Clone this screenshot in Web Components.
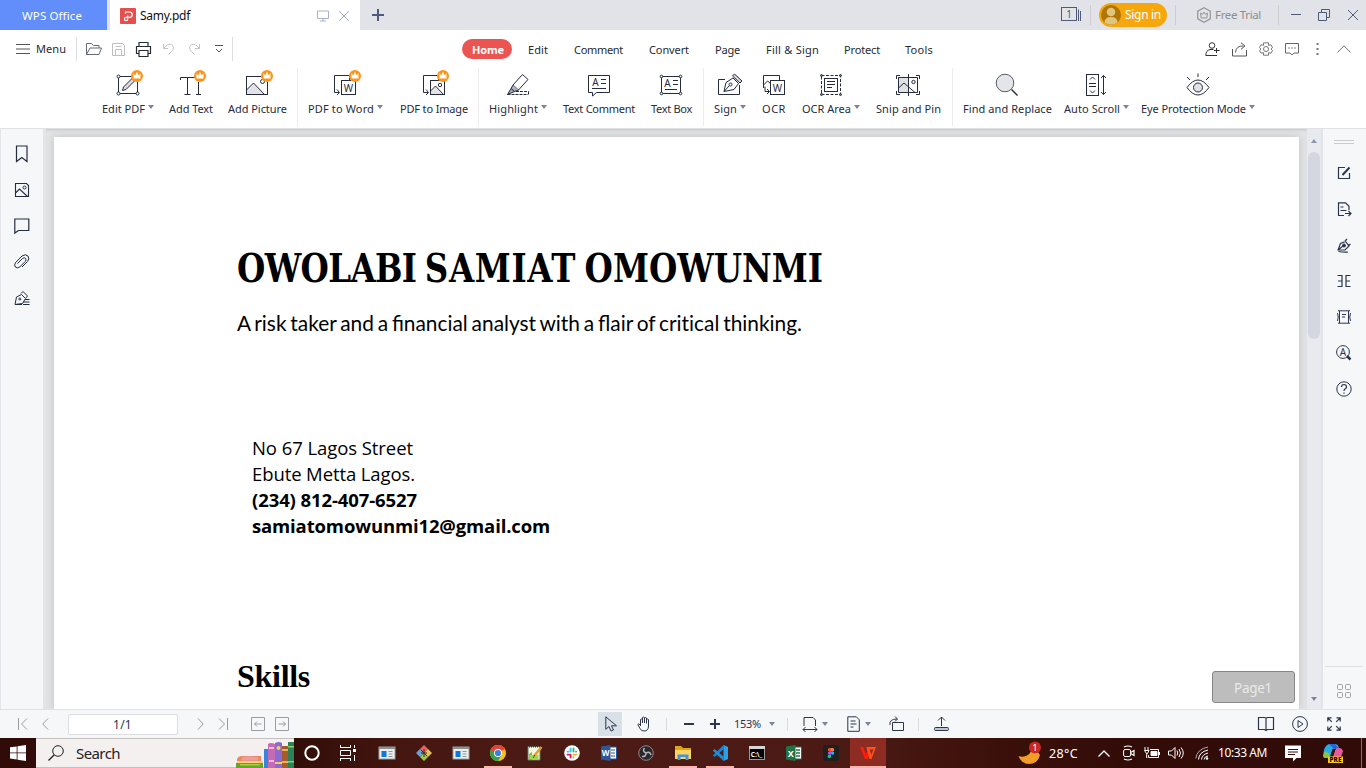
<!DOCTYPE html>
<html lang="en">
<head>
<meta charset="utf-8">
<title>Samy.pdf - WPS Office</title>
<style>
html,body{margin:0;height:100%;overflow:hidden;background:#dcdddf}
body{font-family:"Noto Sans","Open Sans",sans-serif;font-size:11px;color:#262c3e}
</style>
</head>
<body>
<app-window></app-window>
<script>
const crown = x => `<circle cx="${x}" cy="6" r="6" fill="#f9951b" stroke="none"/><path d="M${x-3.5} 3.200l1.300 1.800h.8l.9-2.500h1l.9 2.500h.8l1.300-1.800v5.300h-7z" fill="#fff" stroke="none"/>`;
const behind = `<path d="M18.500 10.500V5.500H3.500V22.500H8M6 19.500l2.500 3-2.500 2.500"/>`;
const appIcon = `<rect x="0" y="2" width="16" height="12" fill="#eceeee" stroke="#9aa0a0"/><path d="M0 3h16" stroke="#8b9293" stroke-width="2"/><rect x="2.500" y="6" width="5" height="6" fill="#0b79d8" stroke="none"/><path d="M9.500 6.500h4M9.500 9h4M9.500 11.500h4" stroke="#8e9698"/>`;
/* name: [width, height, markup] */
const ICONS = {
  edit:[28,28,`<rect x="4.500" y="6.500" width="19" height="17"/><path d="M8.500 20.500l1-3.500 9-9 2.500 2.500-9 9z" fill="#d9dbe0"/><g fill="#fff"><circle cx="4.500" cy="6.500" r="1.500"/><circle cx="4.500" cy="23.500" r="1.500"/><circle cx="23.500" cy="23.500" r="1.500"/></g>${crown(23)}`],
  addtext:[28,28,`<path d="M3.500 10V7.500H18M10.500 7.500V24M7.500 24.500h6M21.500 12V24M19 24.500h5"/>${crown(23)}`],
  picture:[28,28,`<path d="M3.500 20l7-7 11 11.500h-18z" fill="#e1e3e6"/><rect x="3.500" y="6.500" width="21" height="18"/><circle cx="19.500" cy="11.500" r="2"/>${crown(24)}`],
  toword:[28,28,`${behind}<rect x="10.500" y="10.500" width="14" height="14"/><text x="17.500" y="21.500" font-size="10">W</text>${crown(24)}`],
  toimage:[28,28,`${behind}<path d="M10.500 21l5-5 8 8.500h-13z" fill="#e1e3e6"/><rect x="10.500" y="10.500" width="14" height="14"/><circle cx="20" cy="15" r="1.700"/>${crown(23)}`],
  highlight:[28,28,`<path d="M18.500 4.500l5.500 5-9.500 10.500-5.500-5z"/><path d="M9 15l-2 3.500 3.500 3 4-1.500M7 18.500l-3.500 6 7-3" fill="#aaaeb8"/><path d="M3.500 24.500h21M12 21.500h12.500v3" stroke-dasharray="3 1"/>`],
  comment:[28,28,`<path d="M3.500 5.500h21v17h-13l-4 3.500v-3.500h-4z"/><text x="10.500" y="15.500" font-size="10">A</text><path d="M16 9.500h5M16 13.500h5M7 18.500h14"/>`],
  textbox:[28,28,`<rect x="4.500" y="6.500" width="19" height="17"/><text x="10.500" y="17" font-size="10">A</text><path d="M16 10.500h5M16 14.500h5M8 19.500h12"/><g fill="#fff"><circle cx="4.500" cy="6.500" r="1.300"/><circle cx="4.500" cy="23.500" r="1.300"/><circle cx="23.500" cy="6.500" r="1.300"/><circle cx="23.500" cy="23.500" r="1.300"/></g>`],
  sign:[28,28,`<path d="M9 9.500H2.500v15h21V15"/><path d="M8 21.500l2-9 7-4.500 5.500 5.500-4.500 6z"/><path d="M16.500 6l2-2 7.500 7-2 2z" fill="#d4d6da"/><circle cx="14.500" cy="14.500" r="1.500"/><path d="M8 21.500l5-5.500"/>`],
  ocr:[28,28,`<path d="M19.500 10V5.500h-16V18M3.500 15l4-4 3 2.500M5 16.500v5h4M7 19l2.500 2.500L7 24"/><rect x="10.500" y="10.500" width="14" height="14" fill="#fff"/><text x="17.500" y="21.500" font-size="10">W</text>`],
  area:[28,28,`<rect x="4.500" y="5.500" width="19" height="19" stroke-dasharray="3 1.500"/><rect x="7.500" y="8.500" width="13" height="13"/><path d="M10 11.500h8M10 14.500h8M10 17.500h5"/><g fill="#777d8b"><circle cx="4.500" cy="5.500" r="1"/><circle cx="23.500" cy="5.500" r="1"/><circle cx="4.500" cy="24.500" r="1"/><circle cx="23.500" cy="24.500" r="1"/></g>`],
  snip:[28,28,`<path d="M4.500 7.500h9.500v15H4.500z" fill="#dfe1e5" stroke="none"/><path d="M4.500 18l5.500-5 11 9.500"/><path d="M4.500 7.500h19v15h-19zM14.500 4v22"/><circle cx="19.500" cy="12" r="1.700"/><path d="M6 5.500H2.500V9M22 5.500h3.500V9M6 24.500H2.500V21M22 24.500h3.500V21"/>`],
  find:[28,28,`<circle cx="12" cy="13" r="8.800" fill="#e3e5e8" stroke="#555b68"/><path d="M18.500 19.500l6 6" stroke-width="1.400"/>`],
  scroll:[28,28,`<rect x="4.500" y="4.500" width="12" height="21"/><path d="M7 13.500h7M7 16.500h7M8 9.500l2.500-2.500L13 9.500M8 20.500l2.500 2.500L13 20.500M21.500 5.500v19M19 8l2.500-2.500L24 8M19 22l2.500 2.500L24 22"/>`],
  eye:[28,28,`<path d="M3 17.500Q8.500 10 14 10t11 7.500Q19.500 25 14 25T3 17.500z"/><circle cx="14" cy="17.500" r="4.500" fill="#dfe1e5"/><path d="M14 3.500V7M3 7l3 3M25 7l-3 3"/>`],

  pdf:[16,16,`<rect width="16" height="16" rx="1" fill="#e5504f" stroke="none"/><path d="M5.500 6V4H9.500a2.700 2.700 0 0 1 0 5.400H6a1.600 1.600 0 0 0 0 3.200c1.200 0 1.700-.6 1.700-1.600V7.500" stroke="#fff" stroke-width="1.200"/>`],
  monitor:[12,12,`<path d="M.5 1h11v7.500H.5zM3 11h6M6 8.500V11" stroke="#a7b1c8"/>`],
  x:[10,10,`<path d="M0 0l10 10M10 0L0 10"/>`],
  plus:[12,12,`<path d="M6 0v12M0 6h12" stroke-width="2"/>`],
  winlist:[20,14,`<rect x=".5" y=".5" width="15" height="13"/><path d="M17.500 2.500V14M19.500 4v10"/><text x="8" y="10.500" font-size="10">1</text>`],
  avatar:[20,20,`<circle cx="10" cy="10" r="10" fill="#ae7604" stroke="none"/><circle cx="10" cy="7" r="4.300" fill="#e1c480" stroke="none"/><path d="M3.500 17.500q0-5.500 6.500-5.500t6.500 5.500q-6.500 4.500-13 0z" fill="#e1c480" stroke="none"/>`],
  hex:[14,16,`<path d="M7 .8l6.300 3.300v7.800L7 15.200.7 11.900V4.100z" stroke="#949596" stroke-width="1.200"/><path d="M3.500 6l2 1.500L7 5l1.500 2.500 2-1.500-.7 5H4.200z" stroke="#949596"/>`],
  min:[10,10,`<path d="M0 5.500h10"/>`],
  restore:[12,12,`<path d="M.5 3.500h8v8h-8zM3.500 3V.5h8v8H9"/>`],

  burger:[14,10,`<path d="M0 .5h14M0 5h14M0 9.500h14" stroke="#555"/>`],
  open:[16,14,`<path d="M.5 12.500V1.500h5l2 2H13v2.500M.5 12.500l3.500-6.500h11.500l-2.500 6.500z"/>`],
  save:[13,13,`<path d="M.5.500h10l2 2v10H.5zM3.500 12V6.500h6V12M3.500 3.500h6"/>`],
  print:[15,15,`<path d="M3 4.500v-4h9v4M3 11.500H.5v-7h14v7H12M3 8.500h9v6H3z" stroke-width="1.200"/>`],
  undo:[11,12,`<path d="M.5 1v4.500H5M.5 5.500Q5 0 8.500 1.500q4 3 0 7L5.500 11.500"/>`],
  redo:[11,12,`<path d="M10.500 1v4.500H6M10.500 5.500Q6 0 2.500 1.500q-4 3 0 7L5.500 11.500"/>`],
  drop:[8,8,`<path d="M0 .5h8M1 4l3 3 3-3"/>`],
  user:[15,15,`<circle cx="7" cy="3.500" r="2.800"/><path d="M8.500 7.500H5Q.8 8.500.8 13.500H12M11.500 6v5M9 8.500h5.500"/>`],
  share:[15,15,`<path d="M.5 7v7h14V8"/><path d="M3.500 10.500Q4 3.500 11.500 4M9 .8l4 3.200-4 3.200"/>`],
  gear:[14,14,`<path d="M4.500.8h5v2.500l2.500-.5 1.500 3L12 7l1.500 1.500-1.500 2.700-2.500-.5v2.500h-5v-2.500l-2.500.5L.5 8.500 2 7 .5 5.500 2 2.800l2.500.5z"/><circle cx="7" cy="7" r="2.500"/>`],
  chat:[14,13,`<path d="M.5.500h13v9.500H9L7 12 5 10H.5z"/><path d="M3.500 5h1M6.500 5h1M9.500 5h1" stroke-width="1.400"/>`],
  dots:[3,12,`<path d="M.5 1h2M.5 6h2M.5 11h2" stroke-width="2"/>`],
  up:[14,8,`<path d="M.5 7.500L7 .8l6.500 6.700"/>`],

  bookmark:[16,18,`<path d="M2.500 1h10.500v15.500L7.800 12.500 2.500 16.500z" stroke-width="1.200"/>`],
  pic:[16,16,`<path d="M1.500 1.500h11l2 2v11h-13zM1.500 11l4-4 8 7.500" stroke-width="1.100"/><circle cx="10.500" cy="5.500" r="1.500"/>`],
  note:[16,16,`<path d="M.8 1h14v11.500H4.500L.8 15z" stroke-width="1.200"/>`],
  clip:[16,16,`<path d="M3.500 9.500l5-5q2-1.500 3.200 0 1 1.500-.5 3l-5.500 5.500q-2.500 1.800-4.400 0-1.500-2 .3-4.500L8 2q3.500-2.500 6 0 2 3-.5 5.500L8 13"/>`],
  pen:[16,16,`<path d="M1 14.500l1.500-7.500 5-2.500 4 4-3 5zM7 3.500l2-2 4.500 4.500-1.500 2M1 14.500h7M11 9.500h4.500M9 12h6.500M9 14.500h6.500"/><circle cx="5.800" cy="9" r="1"/>`],
  compose:[14,14,`<path d="M8 1.500H1.500v11h11V7" stroke-width="1.200"/><path d="M5.500 9L12.500 1.500" stroke-width="2"/>`],
  export:[14,14,`<path d="M7 13.500H1.500V.8h7l3.500 3.500V8M3.500 5h3M3.500 8.500h6M8 11.500h5.500M11.500 9l2.500 2.500L11.500 14" stroke-width="1.200"/>`],
  fountain:[14,14,`<path d="M1 12l2.500-6.500 5-2 3.500 4.500-4 4zM8 3l2-2M11 8l2.500-2M1.500 13.500q6 1 9.500.5M1 12l5-4" stroke-width="1.200"/><circle cx="7" cy="7.500" r="1.500" fill="currentColor"/>`],
  split:[14,14,`<path d="M.5 1.500h4.500v11H.5M1 7h4M13.500 1.500H9v11h4.500M13 7H9" stroke-width="1.200"/>`],
  frame:[14,14,`<path d="M1 .8h12M1 13.200h12M2.500 1v12M11.500 1v12M.5 3q1.500 4 0 8M13.500 3q-1.500 4 0 8M5 4.500h4M5 7h3"/>`],
  findA:[16,16,`<circle cx="7" cy="7" r="6.400"/><text x="7" y="10.500" font-size="10">A</text><path d="M11 11l3.500 3.500" stroke-width="2.500"/>`],
  help:[16,16,`<circle cx="8" cy="8" r="7.200"/><path d="M5.500 6q0-2.500 2.500-2.500t2.500 2.500q0 1.200-1.500 2-1 .7-1 2M8 11.500v1.300" stroke-width="1.200"/>`],
  grid4:[14,14,`<rect x=".5" y=".5" width="5" height="5" rx="1"/><rect x="8.500" y=".5" width="5" height="5" rx="1"/><rect x=".5" y="8.500" width="5" height="5" rx="1"/><rect x="8.500" y="8.500" width="5" height="5" rx="1"/>`],
  grip:[20,4,`<path d="M0 .5h20M0 3.500h20" stroke="#c9cbd0"/>`],

  first:[10,12,`<path d="M.5 0v12M9 .5L3.500 6 9 11.500"/>`],
  prev:[7,12,`<path d="M6 .5L.8 6 6 11.500"/>`],
  next:[7,12,`<path d="M1 .5L6.200 6 1 11.500"/>`],
  last:[10,12,`<path d="M9.500 0v12M1 .5L6.500 6 1 11.500"/>`],
  boxl:[14,14,`<path d="M.5.500h13v13H.5zM3.500 7h7M6 4.500L3.500 7 6 9.500"/>`],
  boxr:[14,14,`<path d="M.5.500h13v13H.5zM3.500 7h7M8 4.500L10.500 7 8 9.500"/>`],
  cursor:[12,16,`<path d="M.8.800v12.500L4 10.500l2 4.500 2.500-1-2-4.200h5z"/>`],
  hand:[14,16,`<path d="M3.500 10V3.500q1-1 2 0V7M5.500 7V1.500q1-1 2 0V7M7.500 7V2q1-1 2 0v5.500M9.500 7V3.500q1-1 2 0V10q0 5-4.500 5-3 0-4-2.500L.8 8.500q.2-1.500 2.700.5"/>`],
  minus:[10,10,`<path d="M0 5h10" stroke-width="2"/>`],
  plus2:[10,10,`<path d="M0 5h10M5 0v10" stroke-width="2"/>`],
  fit:[16,16,`<path d="M2 10V1.500h9l2.500 2.500V10M1 13.500h14M3.500 11L1 13.500 3.500 16M12.500 11l2.500 2.500-2.500 2.500"/>`],
  doc:[13,16,`<path d="M.8.800h8.500l3 3v11.500H.8zM3.500 5h5M3.500 8h6M3.500 11h3"/>`],
  rotate:[16,16,`<path d="M3.500 6.500h11v8h-11zM1 9Q0 3 8 3M6 .5L8.500 3 6 5.500"/>`],
  upload:[15,16,`<path d="M7.500 10V1M4 4.500L7.500 1 11 4.500"/><rect x=".5" y="11.500" width="14" height="3" rx="1" fill="#bfc3cb"/>`],
  book:[16,16,`<path d="M8 2v12.500M8 2L6.500 1.500h-6v12h6L8 14.500l1.500-1h6v-12h-6z" stroke-width="1.200"/>`],
  play:[16,16,`<circle cx="8" cy="8" r="7.400"/><path d="M6 4.500l5 3.500-5 3.500z"/>`],
  full:[14,14,`<path d="M.8 4.500V.8h3.700M.8.800l4 4M9.500.8h3.700v3.700M13.200.800l-4 4M.8 9.500v3.700h3.700M.8 13.200l4-4M9.500 13.200h3.700V9.500M13.200 13.200l-4-4" stroke-width="1.200"/>`],

  win:[16,16,`<path d="M0 2.300L6.700 1.400V7.500H0zM7.500 1.300L16 0v7.500H7.500zM0 8.300h6.700v6.200L0 13.600zM7.500 8.300H16V16L7.500 14.700z" fill="#fff" stroke="none"/>`],
  lens:[16,16,`<circle cx="10" cy="6" r="5.300"/><path d="M6.300 9.700L.5 15.500" stroke-width="1.300"/>`],
  books:[58,26,`<g stroke="none"><path d="M1 17q1-3 5-3h19v5H1z" fill="#eb8a61"/><path d="M6 15.500q8-2.500 16 0v3H6z" fill="#ee9c9d"/><path d="M1 19h26v3H1z" fill="#f6d374"/><path d="M0 21h27v5H0z" fill="#6aa329"/><path d="M4 22h20v1.500H4z" fill="#a3d047"/><path d="M28 7h5v19h-5z" fill="#3b82dc"/><path d="M32 2q3-2 7 0v24h-7z" fill="#c46bb3"/><path d="M33 5h5v2h-5zM33 18h5v2h-5z" fill="#f6b9da"/><path d="M39 1q4-2 7 0v25h-7z" fill="#8a6bd2"/><circle cx="42.500" cy="6" r="2" fill="#f7d04c"/><path d="M39 20h7v2h-7z" fill="#f7d04c"/><path d="M46 4h6v22h-6z" fill="#a75b2d"/><path d="M46 7h6v2h-6zM46 19h6v2h-6z" fill="#eab259"/><path d="M52 0h6v26h-6z" fill="#2c8256"/><path d="M52 4h6v1.500h-6zM52 19h6v1.500h-6z" fill="#8ecb71"/></g>`],
  ring:[16,16,`<circle cx="8" cy="8" r="6.700" stroke-width="2"/>`],
  taskview:[16,16,`<path d="M0 2.500h11M0 13.500h11M.5 5.500h10v5H.5zM.5 0v3M10.500 0v3M.5 13v3M10.500 13v3M14.500 0v3M14.500 10v6"/><path d="M13 5.500h3" stroke-width="3"/>`],
  app:[16,16,appIcon],
  git:[16,16,`<g stroke="none"><path d="M8 0l4 4-4 4-4-4z" fill="#e36660"/><path d="M4 4l4 4-4 4-4-4z" fill="#66a6d6"/><path d="M12 4l4 4-4 4-4-4z" fill="#e8c15c"/><path d="M8 8l4 4-4 4-4-4z" fill="#9ccf45"/></g><path d="M5 5l6 6M8 4v8M5 8h6" stroke="#402329"/>`],
  chrome:[16,16,`<g stroke="none"><circle cx="8" cy="8" r="8" fill="#fbc116"/><path d="M8 8L1.100 4A8 8 0 0 1 15 4z" fill="#e54235"/><path d="M8 8L1.100 4A8 8 0 0 0 8 16l3.500-6z" fill="#30a350"/><path d="M8 4.300h7.100A8 8 0 0 0 1.100 4l3.700 6z" fill="#e54235"/><circle cx="8" cy="8" r="4" fill="#fff"/><circle cx="8" cy="8" r="3.100" fill="#377fe8"/></g>`],
  notepad:[16,16,`<path d="M1 1.500h12v13.500H1z" fill="#f4f7e6" stroke="#6c7763"/><path d="M2 1.500h11" stroke="#333" stroke-width="2" stroke-dasharray="1 1"/><path d="M2 9l3-2v8H2z" fill="#6cc431" stroke="none"/><path d="M2.500 10h9v4h-9z" fill="#9edb4c" stroke="none"/><path d="M14.500 2L7 11" stroke="#f19a20" stroke-width="2.500"/><path d="M7.500 10l-1 3" stroke="#553"/>`],
  slack:[16,16,`<circle cx="8" cy="8" r="7.800" fill="#fff" stroke="none"/><g stroke-width="1.900" stroke-linecap="round"><path d="M6.600 3.500v3M3.500 6.600h1" stroke="#36c5f0"/><path d="M9.500 3.500v3M12.300 6.600H12" stroke="#2eb67d"/><path d="M9.500 9.600h3M9.500 12.500V12" stroke="#ecb22e"/><path d="M6.600 9.600v3M3.500 9.600h2" stroke="#e01e5a"/></g>`],
  word:[16,16,`<path d="M7 2h8.500v12H7z" fill="#fff" stroke="#2b569a"/><path d="M10 5h4M10 8h4M10 11h4" stroke="#2b569a"/><path d="M0 1.500L9.500 0v16L0 14.500z" fill="#2b569a" stroke="none"/><text x="4.700" y="11" font-size="8" class="w">W</text>`],
  obs:[16,16,`<circle cx="8" cy="8" r="7.300" fill="#29292b" stroke="#89898b"/><path d="M8 8Q4 6 6.500 3M8 8q4-2 5 2M8 8q0 4-4 3.500" stroke="#b5b5b7" stroke-width="1.500"/>`],
  folder:[16,16,`<g stroke="none"><path d="M0 1h6l2 2h8v11H0z" fill="#e2a316"/><path d="M0 5h16v9H0z" fill="#fcd462"/><path d="M2.500 15V9.500h11V15h-3v-3h-5v3z" fill="#3f95da"/></g>`],
  code:[16,16,`<g stroke="none"><path d="M11.500 0v4.500L2.500 12 .8 10.500z" fill="#1782ce"/><path d="M11.500 16v-4.500L2.500 4 .8 5.500z" fill="#1c8edb"/><path d="M11.500 0L16 2v12l-4.500 2z" fill="#28a2ec"/></g>`],
  cmd:[16,14,`<rect x=".5" y=".5" width="15" height="13" fill="#050505" stroke="#999"/><path d="M0 1.500h16" stroke="#d5d5d5" stroke-width="3"/><text x="7.500" y="10.500" font-size="6.500" class="w">C:\\_</text>`],
  excel:[16,16,`<path d="M7 2h8.500v12H7z" fill="#fff" stroke="#217346"/><path d="M10 5h4M10 8h4M10 11h4" stroke="#217346" stroke-width="1.500"/><path d="M0 1.500L9.500 0v16L0 14.500z" fill="#217346" stroke="none"/><text x="4.700" y="11.500" font-size="9" class="w">X</text>`],
  figma:[16,16,`<g stroke="none"><rect width="16" height="16" rx="2" fill="#1f1f1f"/><path d="M8 3H6.500a1.700 1.700 0 0 0 0 3.400H8z" fill="#f24e1e"/><path d="M8 3h1.500a1.700 1.700 0 0 1 0 3.400H8z" fill="#ff7262"/><path d="M8 6.400H6.500a1.700 1.700 0 0 0 0 3.400H8z" fill="#a259ff"/><circle cx="9.600" cy="8.100" r="1.700" fill="#1abcfe"/><path d="M8 9.800H6.500A1.700 1.700 0 1 0 8 11.500z" fill="#0acf83"/></g>`],
  wps:[16,12,`<g stroke="none"><path d="M0 0h3.200l2.600 8 1.700-5L9.500 8l-2 4H5z" fill="#ff1b10"/><path d="M6.300 0h2.500l2.500 7.500L13.500 2.500h-4L8.800 0H16l-4.500 12H9.500z" fill="#ff4f1a"/></g>`],
  moon:[24,24,`<path d="M14.500 3.500A10.500 10.500 0 0 1 .5 15Q3 22.500 11 23q9-.500 11-9z" fill="#f29d27" stroke="none"/><circle cx="17" cy="6.500" r="6" fill="#c9291f" stroke="none"/><text x="17" y="10" font-size="9.500" class="w n">1</text>`],
  chev:[12,7,`<path d="M.5 6.500L6 1l5.500 5.500" stroke-width="1.400"/>`],
  meet:[12,16,`<rect x=".6" y="4.500" width="7" height="7" rx="1.500"/><path d="M7.600 7.500L11 5.500v5l-3.400-2M1 2Q5 0 9 2M1 14q4 2 8 0" stroke-width="1.200"/>`],
  batt:[16,12,`<path d="M6 2.500h8.500v8H4.500V8M15.500 5v3"/><path d="M7 4.500h6v4H7z" fill="#fff"/><path d="M1 0v3M4 0v3M.5 3.500h4.500L3.500 6.500h-1zM2.700 6.500V11"/>`],
  vol:[16,14,`<path d="M.5 5h3L7 1.500v11L3.500 9h-3zM9 4.500q1.500 2.500 0 5M11 3q3 4 0 8M13 1.500q4.500 5.500 0 11"/>`],
  wifi:[14,14,`<path d="M.8 12.500Q2 3 13 1" stroke="#aaa"/><path d="M3.500 13.500Q4 6 13 4M6.500 13.500Q7 8.500 13 7M9 13.500q.5-3 4-3.500"/><circle cx="12" cy="12.500" r="1.200" fill="#fff" stroke="none"/>`],
  notif:[16,16,`<path d="M0 .5h16v12.500h-4.500L8 16.500 8 13H0z" fill="#fff" stroke="none"/><path d="M3 4.500h10M3 7h10M3 9.500h7" stroke="#350d08"/>`],
  copilot:[20,19,`<g stroke="none"><path d="M0 12Q1 1 6 0h6q3 0 4 4-5-1-7 4l-2 6H2q-2 0-2-2z" fill="#28a9e8"/><path d="M0 12l2-5 5 3-2 4H2z" fill="#8dc63c"/><path d="M13 4h3q3 0 4 3l-2 6H9z" fill="#e45a9e"/><path d="M6 0h6l3 4-4 1z" fill="#2166d8"/><path d="M7 13l2.500-8 3 0-2.500 8z" fill="#35100b"/><rect x="5" y="12.500" width="15" height="6.500" fill="#fbc91d"/></g><text x="12.500" y="18" font-size="6.500" class="b">PRE</text>`],
  cu:[6,4,`<path d="M0 4l3-4 3 4z" fill="#8b95ac" stroke="none"/>`],
  cd:[6,4,`<path d="M0 0l3 4 3-4z" fill="#7a859d" stroke="none"/>`]
};

class UiIcon extends HTMLElement {
  connectedCallback(){
    if(this.shadowRoot) return;
    const [w,h,m] = ICONS[this.getAttribute('name')];
    this.attachShadow({mode:'open'}).innerHTML = `<style>:host{display:block;flex:none;width:${w}px;height:${h}px}svg{display:block;overflow:visible}text{fill:currentColor;stroke:none;text-anchor:middle;font-family:"Noto Sans",sans-serif}.w{fill:#fff;font-weight:700}.n{font-weight:400}.b{fill:#000;font-weight:800}</style><svg width="${w}" height="${h}" viewBox="0 0 ${w} ${h}" fill="none" stroke="currentColor">${m}</svg>`;
  }
}
customElements.define('ui-icon',UiIcon);

/* One line of text set to the width "w"; "stretch" scales the glyphs, otherwise tracking is used. */
class FitText extends HTMLElement {
  connectedCallback(){
    if(this.shadowRoot) return;
    const w = +this.getAttribute('w');
    this.attachShadow({mode:'open'}).innerHTML = `<style>:host{display:block;flex:none;width:${w}px;white-space:pre}span{display:inline-block;transform-origin:0 50%}</style><span><slot></slot></span>`;
    const s = this.shadowRoot.querySelector('span'), nat = s.getBoundingClientRect().width;
    if(this.hasAttribute('stretch')) s.style.transform = `scaleX(${w/nat})`;
    else s.style.letterSpacing = (w-nat)/this.textContent.length+'px';
  }
}
customElements.define('fit-text',FitText);

const define = (name,css,html) => customElements.define(name, class extends HTMLElement{
  connectedCallback(){
    if(this.shadowRoot) return;
    const t = document.createElement('template');
    t.innerHTML = `<style>*{box-sizing:border-box}${css}</style>${html}`;
    this.attachShadow({mode:'open'}).append(t.content.cloneNode(true));
  }
});
const ic = (name,gap=0,extra='') => `<ui-icon name="${name}" style="margin-left:${gap}px;${extra}"></ui-icon>`;
const tx = (text,w,gap=0,extra='') => `<fit-text w="${w}" style="margin-left:${gap}px;${extra}">${text}</fit-text>`;
const sep = gap => `<i style="margin-left:${gap}px"></i>`;

define('title-bar',`:host{display:flex;height:30px;background:#e1e3e8;color:#4e5a78;align-items:center}
.wps{width:107px;height:30px;background:#628efb;color:#fff;display:flex;align-items:center;padding-left:22px}
.tab{width:250px;height:30px;background:#fff;margin-left:3px;display:flex;align-items:center;padding-left:10px;color:#111}
i{width:1px;height:20px;background:#cbcdd2}
.in{display:flex;align-items:center;width:68px;height:24px;border-radius:12px;background:#f5a70b;color:#fff;margin-left:8px;font-size:12px}`,
`<div class="wps">${tx('WPS Office',60,0,'font-size:11.500px')}</div><div class="tab">${ic('pdf',0,'margin-top:1px')}${tx('Samy.pdf',50,4,'font-size:12px')}${ic('monitor',127,'margin-top:2px')}${ic('x',10,'color:#a3adc4;margin-top:2px')}</div>
${ic('plus',12)}${ic('winlist',677,'margin-top:-2px')}${sep(9)}
<div class="in">${ic('avatar',2)}${tx('Sign in',36,4,'margin-top:-1px')}</div>${sep(8)}${ic('hex',21)}${tx('Free Trial',46,4,'color:#8d8e91;font-size:11.500px;margin-top:-2px')}${sep(17)}${ic('min',12,'margin-top:-2px')}${ic('restore',17)}${ic('x',18)}`);

define('menu-bar',`:host{display:flex;height:38px;background:#fff;align-items:center;color:#262a33}
i{width:1px;height:24px;background:#dcdde1}
.home{margin-left:229px;width:50px;height:20px;border-radius:10px;background:#eb5451;color:#fff;font-weight:700;display:flex;align-items:center}`,
`${ic('burger',16)}${tx('Menu',30,6,'margin-top:-1px')}${sep(10)}${ic('open',9,'color:#666c7a')}${ic('save',10,'color:#bfbfc2')}${ic('print',11)}${ic('undo',12,'color:#c3c3c5')}${ic('redo',15,'color:#c3c3c5')}${ic('drop',15,'color:#555')}${sep(9)}
<div class="home">${tx('Home',32,10)}</div>${[['Edit',20,16],['Comment',49,26],['Convert',40,26],['Page',25,26],['Fill &amp; Sign',53,26],['Protect',36,25],['Tools',28,25]].map(a=>tx(...a)).join('')}
${ic('user',272,'color:#333')}${ic('share',12,'color:#555')}${ic('gear',12,'color:#777')}${ic('chat',12,'color:#666')}${ic('dots',17,'color:#777')}${ic('up',18,'color:#777')}`);

customElements.define('ribbon-item', class extends HTMLElement{
  connectedCallback(){
    if(this.shadowRoot) return;
    const a = n => this.getAttribute(n), w=+a('w'), caret=this.hasAttribute('menu'), n=+a('nudge');
    this.attachShadow({mode:'open'}).innerHTML = `<style>:host{display:flex;flex-direction:column;align-items:center;flex:none;width:${w}px}.l{display:flex;height:16px;line-height:16px;margin-top:3px;padding-left:${n}px}ui-icon.c{margin:4px 0 0 3px}</style><ui-icon name="${a('icon')}"></ui-icon><div class="l"><fit-text w="${(caret?w-9:w)-n}">${a('label')}</fit-text>${caret?'<ui-icon class="c" name="cd"></ui-icon>':''}</div>`;
  }
});
const item = (g,w,icon,label,menu='') => `<ribbon-item style="margin-left:${g}px" w="${w}" icon="${icon}" label="${label}" ${menu}></ribbon-item>`;
define('ribbon-bar',`:host{display:flex;height:61px;background:#fff;align-items:flex-start;padding-top:2px;border-bottom:1px solid #e0e1e4}
i{width:1px;height:58px;background:#ececef;margin-top:-2px}`,
item(102,52,'edit','Edit PDF','menu')+item(15,44,'addtext','Add Text')+item(14,60,'picture','Add Picture','nudge="1"')+sep(10)
+item(9,76,'toword','PDF to Word','menu nudge="1"')+item(17,68,'toimage','PDF to Image')+sep(10)
+item(10,58,'highlight','Highlight','menu')+item(16,72,'comment','Text Comment')+item(15,42,'textbox','Text Box','nudge="1"')+sep(11)
+item(10,32,'sign','Sign','menu')+item(16,24,'ocr','OCR')+item(16,58,'area','OCR Area','menu')+item(15,66,'snip','Snip and Pin','nudge="1"')+sep(11)
+item(9,90,'find','Find and Replace','nudge="1"')+item(11,66,'scroll','Auto Scroll','menu nudge="1"')+item(12,114,'eye','Eye Protection Mode','menu'));

define('nav-panel',`:host{display:flex;flex-direction:column;gap:20px;width:46px;background:#f5f7f9;border-right:3px solid #e3e5ea;border-left:1px solid #e3e5ea;padding:16px 0 0 13px;color:#252c42}`,
ic('bookmark')+ic('pic',0,'margin-top:-1px')+ic('note')+ic('clip')+ic('pen'));

define('tool-panel',`:host{display:flex;flex-direction:column;align-items:center;width:45px;background:#f5f7f9;border-left:2px solid #e2e4ea;padding:11px 2px 11px 0;color:#2b354f}
section{display:flex;flex-direction:column;align-items:center;gap:22px;margin-top:22px}hr{width:38px;height:1px;border:0;background:#dfe1e5;margin:auto 0 17px}`,
ic('grip')+`<section>${['compose','export','fountain','split','frame'].map(n=>ic(n)).join('')}${ic('findA',0,'margin-top:-1px')}${ic('help',0,'margin-top:-2px')}</section><hr>${ic('grid4',0,'color:#9ea0a5')}`);

define('scroll-bar',`:host{display:flex;flex-direction:column;align-items:center;width:14px;background:#e8eaef;padding:10px 0 8px}
b{width:12px;height:187px;border-radius:6px;background:#d4d7df;margin:9px 0 auto}`,
ic('cu')+'<b></b>'+ic('cd'));

define('pdf-page',`:host{display:block;flex:1;position:relative;padding:8px 8px 0;background:#e2e3e5;box-shadow:inset 0 3px 3px -2px #c4c5c8;overflow:hidden}
main{height:572px;background:#fff;padding:102px 0 0 183px;color:#000;overflow:hidden;box-shadow:0 0 8px rgba(0,0,0,.14)}
h1,h2,p{margin:0}
h1{font:bold 38.500px/60px "DejaVu Serif Condensed","DejaVu Serif",serif;height:60px;word-spacing:-3px}
.tight{letter-spacing:-.7px}.loose{letter-spacing:.7px}
.sub{font:20.500px/28px Lato,sans-serif;height:28px;margin-top:10px;word-spacing:-1.500px}
.sub span{font-variant-ligatures:none}
address{font:normal 18.500px/26px "Open Sans",sans-serif;margin:98px 0 0 15px}
strong{display:block}
h2{font:bold 32px/40px "Liberation Serif",serif;margin-top:117px}
aside{position:absolute;right:12px;top:542px;width:83px;height:32px;border:1px solid #868686;border-radius:3px;background:#bdbdbd;color:#e9e9e9;display:flex;align-items:center;padding:2px 0 0 21px;font-size:13.500px}`,
`<main><h1>${tx('<span class="tight">OWOLABI</span> <span class="loose">SAMIAT</span> OMOWUNMI',586).replace(' w=',' stretch w=')}</h1><p class="sub">${tx('A risk taker and a financial analyst with a flair of <span>critical</span> thinking.',565).replace(' w=',' stretch w=')}</p>
<address>${tx('No 67 Lagos Street',161)}${tx('Ebute Metta Lagos.',163)}<strong>${tx('(234) 812-407-6527',165)}${tx('samiatomowunmi12@gmail.com',298)}</strong></address><h2>${tx('Skills',73)}</h2></main><aside>${tx('Page1',38)}</aside>`);

define('status-bar',`:host{display:flex;height:29px;background:#f5f7f9;border-top:1px solid #e1e3e8;align-items:center;color:#2b354c}
i{width:1px;height:13px;background:#dadce1}.pg{width:110px;height:21px;background:#fff;border:1px solid #dcdee3;border-radius:2px;margin-left:19px;display:flex;align-items:center;padding-left:44px;font-size:12px}
.sel{width:24px;height:24px;background:#dae0e8;margin-left:309px;display:flex;align-items:center}`,
`${ic('first',18,'color:#999ca3')}${ic('prev',14,'color:#999ca3')}<div class="pg">${tx('1/1',19)}</div>${ic('next',19,'color:#999ca3')}${ic('last',14,'color:#999ca3')}${ic('boxl',23,'color:#999ca3')}${ic('boxr',10,'color:#999ca3')}
<div class="sel">${ic('cursor',7)}</div>${ic('hand',15)}${sep(15)}${ic('minus',17)}${ic('plus2',16)}${tx('153%',27,14,'margin-top:-1px')}${ic('cd',8)}${sep(12)}${ic('fit',14)}${ic('cd',4)}${ic('doc',19)}${ic('cd',5)}${ic('rotate',18)}${sep(13)}${ic('upload',15)}${ic('book',309)}${ic('play',18)}${ic('full',19)}`);

define('task-bar',`:host{display:flex;height:30px;align-items:center;color:#fff;background:linear-gradient(90deg,#300b07 0,#320d08 295px,#451610 400px,#4c1b14 560px,#4c1a14 850px,#3b100b 1000px,#330c08 1120px,#300b07)}
.s{width:258px;height:30px;margin-left:10px;background:#f4f0ef;border:1px solid #c5bfbd;border-width:1px 0;display:flex;align-items:center;color:#222}
.a{width:28px;height:30px;display:flex;align-items:center;justify-content:center;margin-left:9px}.on{border-bottom:2px solid #fbb5ae;padding-top:2px}.wps{width:36px;background:#8d2c22;margin-left:5px}
i{width:1px;height:30px;background:#817370}`,
`${ic('win',10)}<div class="s">${ic('lens',12)}${tx('Search',44,12,'font-size:15px')}${ic('books',116,'margin-top:3px')}</div>${ic('ring',10)}${ic('taskview',20)}
<div class="a" style="margin-left:17px">${ic('app')}</div>${[['git'],['app'],['chrome',1],['notepad'],['slack'],['word'],['obs'],['folder',1],['code',1],['cmd'],['excel'],['figma']].map(([n,o])=>`<div class="a ${o?'on':''}">${ic(n)}</div>`).join('')}<div class="a on wps">${ic('wps')}</div>
${ic('moon',132)}${tx('28°C',29,7,'font-size:12.500px')}${ic('chev',20)}${ic('meet',13)}${ic('batt',9)}${ic('vol',8)}${ic('wifi',11)}${tx('10:33 AM',49,9,'font-size:12px;margin-top:-1px')}${ic('notif',18)}${ic('copilot',22)}${sep(18)}`);

define('app-window',`:host{display:flex;flex-direction:column;width:1366px;height:768px}.work{display:flex;height:580px}`,
`<title-bar></title-bar><menu-bar></menu-bar><ribbon-bar></ribbon-bar><div class="work"><nav-panel></nav-panel><pdf-page></pdf-page><scroll-bar></scroll-bar><tool-panel></tool-panel></div><status-bar></status-bar><task-bar></task-bar>`);
</script>
</body>
</html>
